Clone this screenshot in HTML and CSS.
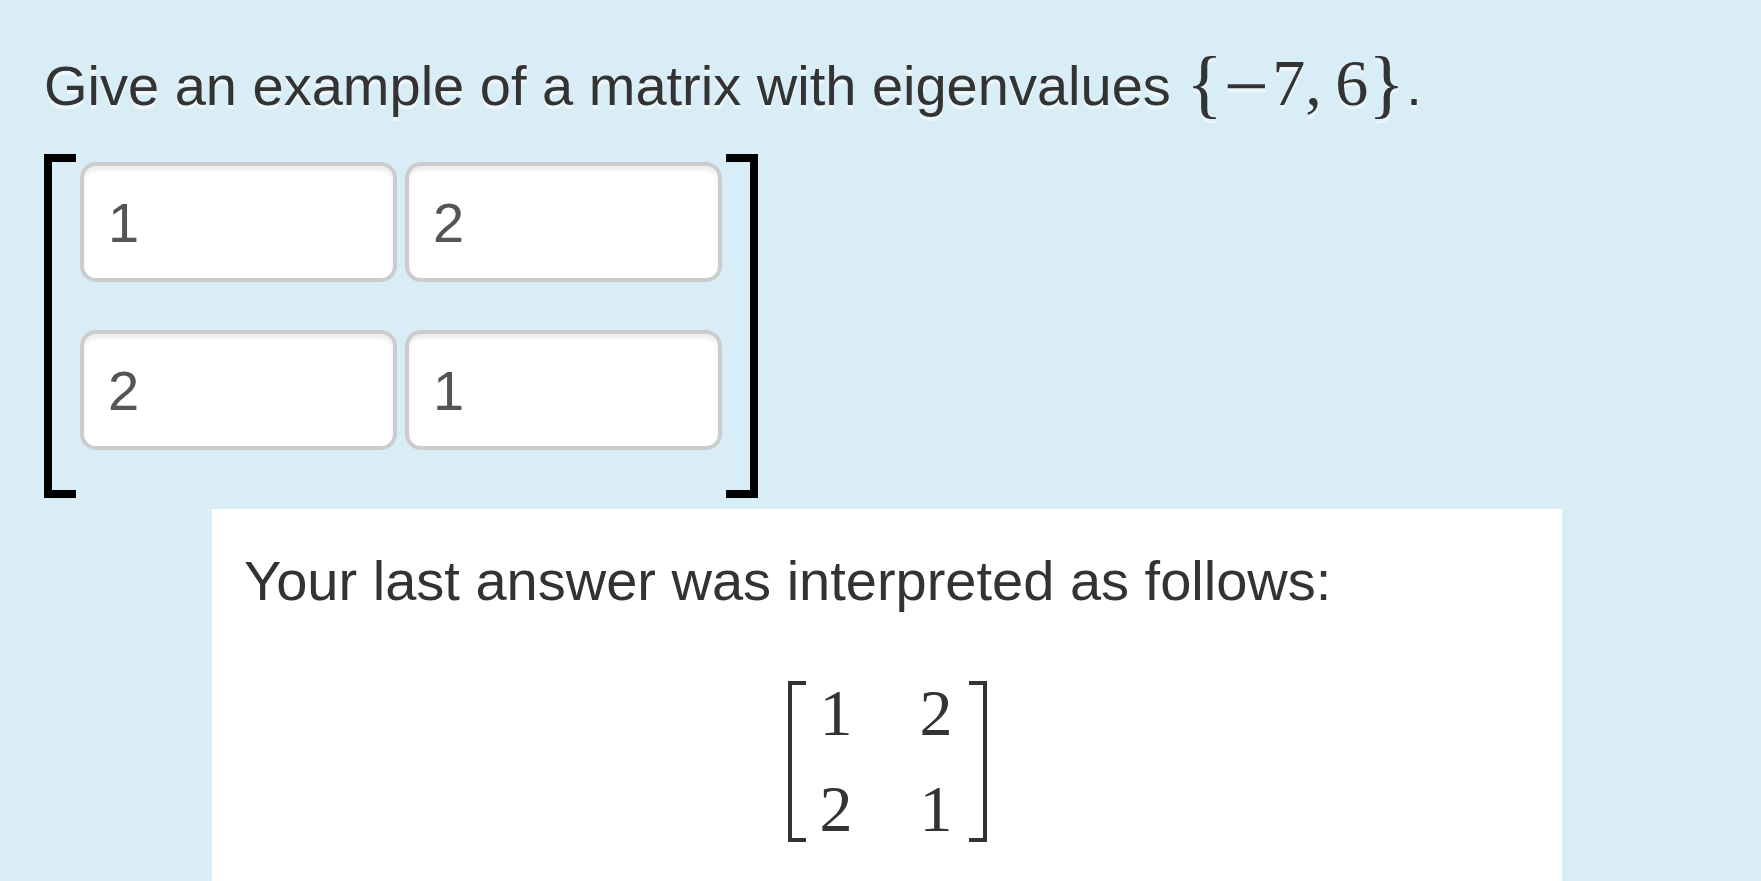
FILE: index.html
```html
<!DOCTYPE html>
<html lang="en">
<head>
<meta charset="utf-8">
<title>Matrix with given eigenvalues</title>
<link rel="stylesheet" href="styles.css">
</head>
<body>
<main class="question">
  <p class="prompt">Give an example of a matrix with eigenvalues <span class="math"><span class="brace">{</span><span class="minus">−</span>7<span class="comma">,</span>6<span class="brace">}</span></span>.</p>
  <form class="matrix-input">
    <span class="bracket bracket-left"></span>
    <div class="cells">
      <input class="cell" type="text" value="1" aria-label="Row 1, column 1">
      <input class="cell" type="text" value="2" aria-label="Row 1, column 2">
      <input class="cell" type="text" value="2" aria-label="Row 2, column 1">
      <input class="cell" type="text" value="1" aria-label="Row 2, column 2">
    </div>
    <span class="bracket bracket-right"></span>
  </form>
  <section class="feedback">
    <p class="feedback-text">Your last answer was interpreted as follows:</p>
    <div class="matrix">
      <span class="thin-bracket thin-left"></span>
      <table class="entries">
        <tr><td>1</td><td>2</td></tr>
        <tr><td>2</td><td>1</td></tr>
      </table>
      <span class="thin-bracket thin-right"></span>
    </div>
  </section>
</main>
</body>
</html>
```

FILE: styles.css
```css
* {
  box-sizing: border-box;
}

body {
  margin: 0;
  background: #d9edf6;
  color: #333;
  font-family: "Liberation Sans", Arial, sans-serif;
  font-size: 56px;
  line-height: 80px;
}

.question {
  display: flex;
  flex-direction: column;
  min-height: 100vh;
  padding: 46px 0 0 44px;
}

.prompt {
  margin: 0 0 28px;
  text-shadow: 0 4px 0 rgba(255, 255, 255, 0.5);
}

.math {
  margin-right: 4px;
  font-family: "Liberation Serif", "Times New Roman", serif;
  font-size: 66px;
  line-height: 60px;
}

.brace,
.minus,
.comma {
  display: inline-block;
}

.brace {
  width: 34px;
  font-size: 76px;
  text-align: center;
  vertical-align: -4px;
}

.minus {
  width: 52px;
  font-size: 80px;
  text-align: center;
  vertical-align: -8px;
}

.comma {
  width: 30px;
}

.matrix-input {
  display: flex;
  gap: 4px;
  margin: 0 0 11px;
}

.bracket {
  width: 32px;
  border: 8px solid #000;
}

.bracket-left {
  border-right: 0;
}

.bracket-right {
  border-left: 0;
}

.cells {
  display: grid;
  grid-template-columns: repeat(2, 317px);
  gap: 48px 8px;
  padding: 8px 0 48px;
}

.cell {
  width: 100%;
  height: 120px;
  padding: 0 24px;
  border: 4px solid #ccc;
  border-radius: 16px;
  background: #fff;
  box-shadow: inset 0 4px 4px rgba(0, 0, 0, 0.075);
  color: #555;
  font: inherit;
}

.feedback {
  flex: 1;
  margin: 0 199px 0 168px;
  padding: 32px 32px 39px;
  background: #fff;
}

.feedback-text {
  margin: 0 0 60px;
}

.matrix {
  display: flex;
  justify-content: center;
}

.thin-bracket {
  width: 18px;
  border: 4px solid #333;
}

.thin-left {
  border-right: 0;
}

.thin-right {
  border-left: 0;
}

.entries {
  margin: -16px 0 -15px;
  border-collapse: collapse;
  font-family: "Liberation Serif", "Times New Roman", serif;
  font-size: 66px;
  line-height: 96px;
}

.entries td {
  padding: 0 16px 0 14px;
  text-align: center;
}

.entries td + td {
  padding-left: 51px;
}
```
